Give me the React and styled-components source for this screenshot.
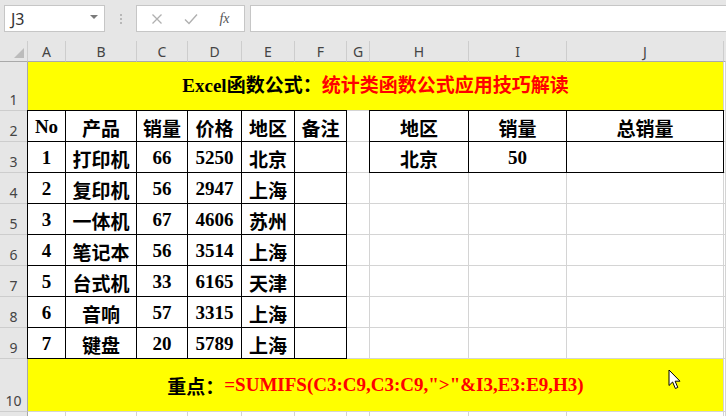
import React from "react";
import styled, { createGlobalStyle } from "styled-components";

const GlobalStyle = createGlobalStyle`
  html, body {
    margin: 0;
    padding: 0;
    background: #ffffff;
  }
  body {
    font-family: "Noto Sans", "Noto Sans CJK SC", sans-serif;
    overflow: hidden;
  }
`;

const Page = styled.div`
  position: relative;
  width: 726px;
  height: 416px;
  overflow: hidden;
  background: #ffffff;
`;

const FormulaBar = styled.div`
  display: flex;
  align-items: flex-start;
  height: 41px;
  box-sizing: border-box;
  padding: 5px 0 0 4px;
  background: #e6e6e6;
`;

const NameBox = styled.div`
  display: flex;
  align-items: center;
  justify-content: space-between;
  width: 101px;
  height: 27px;
  box-sizing: border-box;
  padding: 0 6px 0 6px;
  background: #fff;
  border: 1px solid #c6c6c6;
  font-size: 16px;
  color: #333;
`;

const Caret = styled.span`
  width: 0;
  height: 0;
  border-left: 4px solid transparent;
  border-right: 4px solid transparent;
  border-top: 4px solid #7a7a7a;
  margin-top: -4px;
`;

const Grip = styled.div`
  display: flex;
  flex-direction: column;
  gap: 2px;
  width: 31px;
  align-items: center;
  padding-top: 9px;
  span {
    width: 2px;
    height: 2px;
    background: #b8b8b8;
  }
`;

const ActionBox = styled.div`
  display: flex;
  align-items: center;
  justify-content: space-around;
  width: 109px;
  height: 27px;
  box-sizing: border-box;
  padding: 0 4px;
  background: #fff;
  border: 1px solid #c6c6c6;
`;

const Fx = styled.span`
  font-family: "Liberation Serif", serif;
  font-style: italic;
  font-size: 14px;
  color: #555;
`;

const InputBox = styled.div`
  flex: 1;
  margin-left: 5px;
  height: 27px;
  box-sizing: border-box;
  background: #fff;
  border: 1px solid #c6c6c6;
  border-right: none;
`;

const Sheet = styled.div`
  display: grid;
  grid-template-columns: 28px 38px 71px 51px 54px 53px 52px 23px 99px 98px 157px 1fr;
  grid-template-rows: 21px 49px repeat(8, 31px) 53px 31px;
`;

const ColHead = styled.div`
  box-sizing: border-box;
  background: #e6e6e6;
  border-right: 1px solid ${(p) => (p.$last ? "transparent" : "#cdcdcd")};
  border-bottom: 1px solid #a9a9a9;
  display: flex;
  align-items: center;
  justify-content: center;
  font-size: 14px;
  color: #444;
  position: relative;
`;

const Corner = styled(ColHead)`
  &::after {
    content: "";
    position: absolute;
    right: 3px;
    bottom: 3px;
    width: 0;
    height: 0;
    border-left: 10px solid transparent;
    border-bottom: 10px solid #bcbcbc;
  }
`;

const RowHead = styled.div`
  box-sizing: border-box;
  background: #e6e6e6;
  border-right: 1px solid #a9a9a9;
  border-bottom: 1px solid #cdcdcd;
  display: flex;
  align-items: flex-end;
  justify-content: center;
  padding-bottom: 1px;
  font-size: 14px;
  color: #444;
`;

const shadowFor = (p) => {
  const s = [];
  if (p.$top) s.push("0 -1px 0 #000");
  if (p.$left) s.push("-1px 0 0 #000");
  if (p.$top && p.$left) s.push("-1px -1px 0 #000");
  return s.length ? s.join(", ") : "none";
};

const Cell = styled.div`
  box-sizing: border-box;
  border-right: 1px solid ${(p) => (p.$boxed ? "#000" : "#d4d4d4")};
  border-bottom: 1px solid ${(p) => (p.$boxed ? "#000" : "#d4d4d4")};
  box-shadow: ${shadowFor};
  display: flex;
  align-items: center;
  justify-content: center;
  padding-top: 2px;
  font-family: "Liberation Serif", "Noto Sans CJK SC", serif;
  font-weight: 700;
  font-size: 19px;
  color: #000;
  white-space: nowrap;
  overflow: visible;
`;

const Banner = styled.div`
  grid-column: 2 / 12;
  box-sizing: border-box;
  background: #ffff00;
  border-right: 1px solid #d4d4d4;
  border-bottom: 1px solid #d4d4d4;
  display: flex;
  align-items: center;
  justify-content: center;
  padding-bottom: ${(p) => p.$lift || 0}px;
  font-family: "Liberation Serif", "Noto Sans CJK SC", serif;
  font-weight: 700;
  font-size: 19px;
  color: #000;
  white-space: nowrap;
`;

const Red = styled.span`
  color: #f00;
`;

const Pointer = styled.svg`
  position: absolute;
  left: 668px;
  top: 369px;
`;

const cols = ["A", "B", "C", "D", "E", "F", "G", "H", "I", "J"];

const header = ["No", "产品", "销量", "价格", "地区", "备注"];
const data = [
  [1, "打印机", 66, 5250, "北京", ""],
  [2, "复印机", 56, 2947, "上海", ""],
  [3, "一体机", 67, 4606, "苏州", ""],
  [4, "笔记本", 56, 3514, "上海", ""],
  [5, "台式机", 33, 6165, "天津", ""],
  [6, "音响", 57, 3315, "上海", ""],
  [7, "键盘", 20, 5789, "上海", ""],
];
const lookup = [
  ["地区", "销量", "总销量"],
  ["北京", 50, ""],
];

const App = () => {
  const body = [header, ...data];

  const renderRow = (row, i) => {
    const r = i + 2;
    const side = i < lookup.length ? lookup[i] : ["", "", ""];
    const inLookup = i < lookup.length;
    return (
      <React.Fragment key={r}>
        <RowHead>{r}</RowHead>
        {row.map((v, c) => (
          <Cell key={c} $boxed $top={i === 0} $left={c === 0}>
            {v}
          </Cell>
        ))}
        <Cell />
        {side.map((v, c) => (
          <Cell key={"s" + c} $boxed={inLookup} $top={i === 0} $left={inLookup && c === 0}>
            {v}
          </Cell>
        ))}
        <Cell />
      </React.Fragment>
    );
  };

  return (
    <Page>
      <GlobalStyle />
      <FormulaBar>
        <NameBox>
          J3
          <Caret />
        </NameBox>
        <Grip>
          <span />
          <span />
          <span />
        </Grip>
        <ActionBox>
          <svg width="12" height="12" viewBox="0 0 12 12">
            <path d="M1.5 1.5 L10.5 10.5 M10.5 1.5 L1.5 10.5" stroke="#b0b0b0" strokeWidth="1.3" fill="none" />
          </svg>
          <svg width="14" height="12" viewBox="0 0 14 12">
            <path d="M1 6.5 L5 10.5 L13 1.5" stroke="#b0b0b0" strokeWidth="1.4" fill="none" />
          </svg>
          <Fx>fx</Fx>
        </ActionBox>
        <InputBox />
      </FormulaBar>

      <Sheet>
        <Corner />
        {cols.map((c) => (
          <ColHead key={c}>{c}</ColHead>
        ))}
        <ColHead $last />

        <RowHead>1</RowHead>
        <Banner $lift={6}>
          Excel函数公式：<Red>统计类函数公式应用技巧解读</Red>
        </Banner>
        <Cell />

        {body.map(renderRow)}

        <RowHead>10</RowHead>
        <Banner>
          重点：<Red>=SUMIFS(C3:C9,C3:C9,"&gt;"&amp;I3,E3:E9,H3)</Red>
        </Banner>
        <Cell />

        <RowHead />
        {cols.map((c) => (
          <Cell key={c} />
        ))}
        <Cell />
      </Sheet>

      <Pointer width="15" height="22" viewBox="0 0 15 22">
        <path
          d="M1 1 L1 16.5 L4.6 13 L7.4 19.5 L9.8 18.4 L7.1 12.2 L12 12.2 Z"
          fill="#fff"
          stroke="#000"
          strokeWidth="1"
          strokeLinejoin="round"
        />
      </Pointer>
    </Page>
  );
};

export default App;
